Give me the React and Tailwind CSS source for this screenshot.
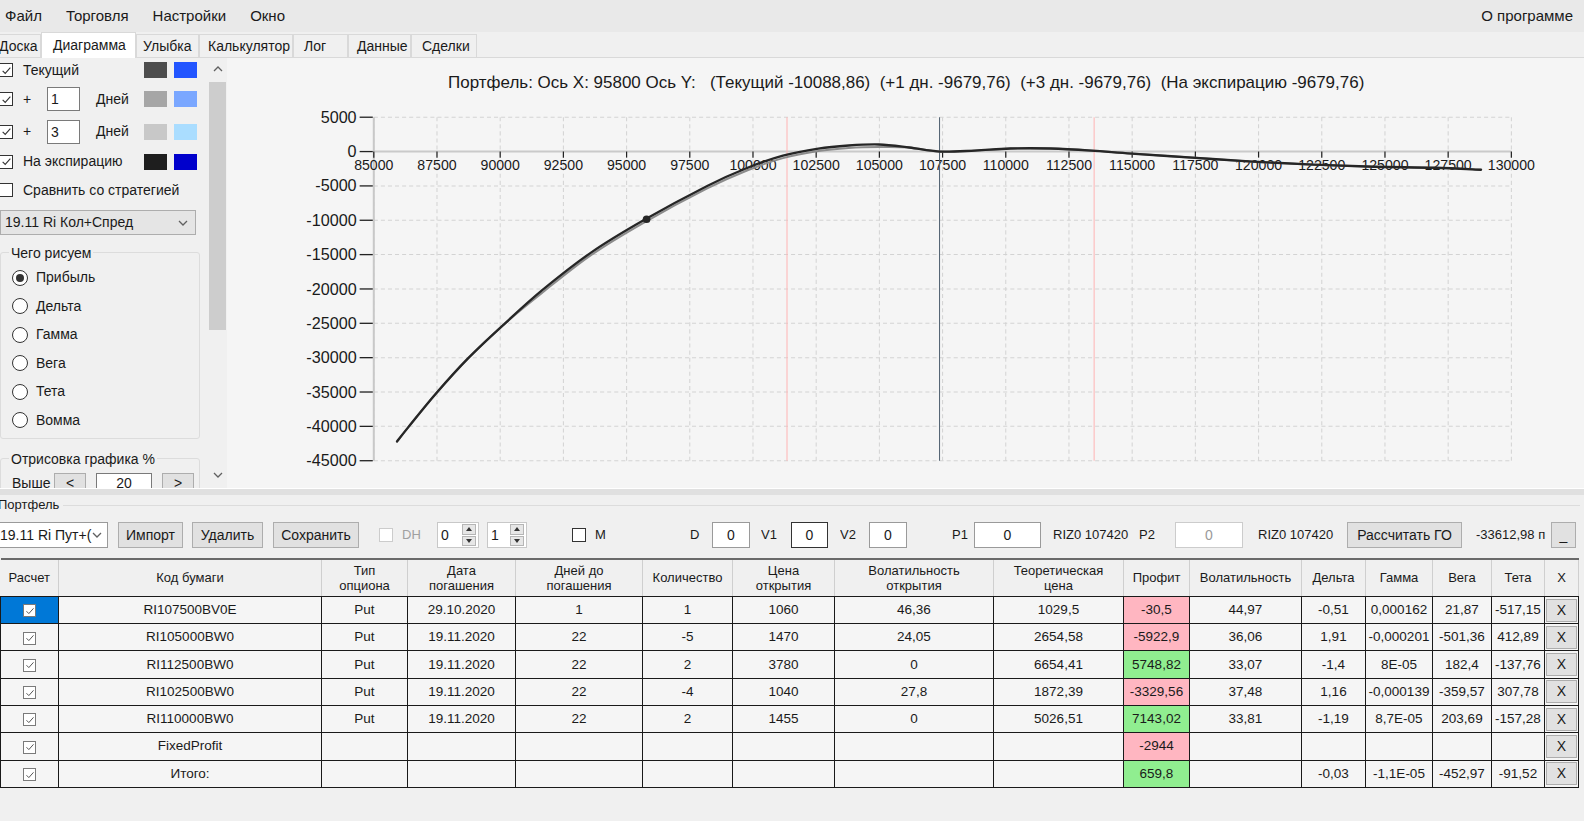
import React from "react";

const font = "font-['Liberation_Sans',Arial,sans-serif]";

const menu = ["Файл", "Торговля", "Настройки", "Окно"];

const tabs = [
    { t: "Доска",       w: "w-[47px]", cls: "-ml-[6px] pl-[4px]" },
    { t: "Диаграмма",   w: "w-[95px]", cls: "pl-[11px]", active: true },
    { t: "Улыбка",      w: "w-[63px]", cls: "pl-[6px]" },
    { t: "Калькулятор", w: "w-[94px]", cls: "pl-[8px]" },
    { t: "Лог",         w: "w-[55px]", cls: "pl-[10px]" },
    { t: "Данные",      w: "w-[63px]", cls: "pl-[8px]" },
    { t: "Сделки",      w: "w-[66px]", cls: "pl-[10px]" },
];

const Check = ({ checked = true, disabled = false, className = "" }) => (
    <span className={`inline-flex shrink-0 w-[14px] h-[14px] items-center justify-center border bg-white ${disabled ? "border-[#cccccc]" : "border-[#333333]"} ${className}`}>
        {checked && (
            <svg viewBox="0 0 12 12" className="w-[11px] h-[11px]">
                <path d="M1.8 6.3 L4.6 9.1 L10.2 2.8" fill="none" stroke="#333" strokeWidth="1.2" />
            </svg>
        )}
    </span>
);

const GridCheck = () => (
    <span className="inline-flex w-[13px] h-[13px] items-center justify-center border border-[#7a7a7a] bg-white align-middle">
        <svg viewBox="0 0 12 12" className="w-[10px] h-[10px]">
            <path d="M1.8 6.3 L4.6 9.1 L10.2 2.8" fill="none" stroke="#555" strokeWidth="1.2" />
        </svg>
    </span>
);

const Radio = ({ checked }) => (
    <span className="w-[16px] h-[16px] rounded-full border border-[#333333] bg-white flex items-center justify-center">
        {checked && <span className="w-[8px] h-[8px] rounded-full bg-[#333333]" />}
    </span>
);

const Swatches = ({ a, b }) => (
    <div className="flex gap-[7px]">
        <span className={`w-[23px] h-[16px] ${a}`} />
        <span className={`w-[23px] h-[16px] ${b}`} />
    </div>
);

const Chevron = ({ up }) => (
    <svg viewBox="0 0 10 6" className="w-[10px] h-[6px]">
        <path d={up ? "M1 5 L5 1 L9 5" : "M1 1 L5 5 L9 1"} fill="none" stroke="#606060" strokeWidth="1.3" />
    </svg>
);

// ---------- chart (viewBox units are a hair smaller than page px) ----------
const X0 = 370, X1 = 1496, Y0 = 116, Y1 = 456;
const xTicks = Array.from({ length: 19 }, (_, i) => 85000 + i * 2500);
const yTicks = Array.from({ length: 11 }, (_, i) => 5000 - i * 5000);
const px = v => X0 + (v - 85000) / 2500 * ((X1 - X0) / 18);
const py = v => 150 - v / 5000 * 34;

const curve = [
    [393, 437], [404, 423], [432, 389], [463, 355], [500, 320], [537, 287], [585, 250],
    [637, 218], [700, 184], [740, 166], [775, 154], [810, 147], [840, 144], [870, 143],
    [900, 146], [930, 150], [965, 149], [1000, 147], [1040, 147], [1080, 149], [1120, 152],
    [1180, 156], [1240, 160], [1300, 163], [1360, 165], [1420, 166], [1466, 168],
];
const curve2 = curve.map(([x, y]) => [x, x > 520 && x < 900 ? y + 2.5 : y]);

const smooth = pts => {
    let d = `M${pts[0][0]},${pts[0][1]}`;
    for (let i = 0; i < pts.length - 1; i++) {
        const p0 = pts[i - 1] || pts[i], p1 = pts[i], p2 = pts[i + 1], p3 = pts[i + 2] || p2;
        const c1 = [p1[0] + (p2[0] - p0[0]) / 6, p1[1] + (p2[1] - p0[1]) / 6];
        const c2 = [p2[0] - (p3[0] - p1[0]) / 6, p2[1] - (p3[1] - p1[1]) / 6];
        d += ` C${c1[0]},${c1[1]} ${c2[0]},${c2[1]} ${p2[0]},${p2[1]}`;
    }
    return d;
};

const title = "Портфель: Ось X: 95800 Ось Y:   (Текущий -10088,86)  (+1 дн. -9679,76)  (+3 дн. -9679,76)  (На экспирацию -9679,76)".replace(/ /g, "\u00a0");

const Chart = () => (
    <svg width="1357" height="430" viewBox="224.7 57.4 1343.2 425.6" className="block bg-[#f5f5f5]">
        <text x="897" y="87.5" textAnchor="middle" fontSize="16.8" fill="#1a1a1a">{title}</text>

        {yTicks.filter(v => v !== 0).map(v => (
            <line key={"h" + v} x1={X0} x2={X1} y1={py(v)} y2={py(v)} stroke="#d3d3d3" strokeDasharray="4 3" />
        ))}
        {xTicks.map(v => (
            <line key={"v" + v} x1={px(v)} x2={px(v)} y1={Y0} y2={Y1} stroke="#d3d3d3" strokeDasharray="4 3" />
        ))}

        <line x1={X0} x2={X0} y1={Y0} y2={Y1} stroke="#c8c8c8" strokeWidth="2" />
        <line x1={X0} x2={X1} y1={150} y2={150} stroke="#cacaca" strokeWidth="2" />

        {yTicks.map(v => (
            <g key={"yt" + v}>
                <line x1="356" x2="369" y1={py(v)} y2={py(v)} stroke="#222" strokeWidth="1.3" />
                <text x="353" y={py(v) + 5.5} textAnchor="end" fontSize="16" fill="#1a1a1a">{v}</text>
            </g>
        ))}
        {xTicks.map(v => (
            <g key={"xt" + v}>
                <line x1={px(v)} x2={px(v)} y1="150" y2="156" stroke="#222" strokeWidth="1.2" />
                <text x={px(v)} y="168" textAnchor="middle" fontSize="14" fill="#1a1a1a">{v}</text>
            </g>
        ))}

        <line x1="779" x2="779" y1={Y0} y2={Y1} stroke="#ffb4b4" />
        <line x1="1083" x2="1083" y1={Y0} y2={Y1} stroke="#ffb4b4" />
        <line x1="930" x2="930" y1={Y0} y2={Y1} stroke="#506070" />

        <path d={smooth(curve2)} fill="none" stroke="#8c8c8c" strokeWidth="2" />
        <path d={smooth(curve)} fill="none" stroke="#262626" strokeWidth="2.3" strokeLinecap="round" />
        <circle cx="640" cy="217" r="3.8" fill="#262626" />
    </svg>
);

// ---------- table ----------
const cols = [
    { t: "Расчет", w: "w-[58px]" },
    { t: "Код бумаги", w: "w-[263px]" },
    { t: "Тип\nопциона", w: "w-[86px]" },
    { t: "Дата\nпогашения", w: "w-[108px]" },
    { t: "Дней до\nпогашения", w: "w-[127px]" },
    { t: "Количество", w: "w-[90px]" },
    { t: "Цена\nоткрытия", w: "w-[102px]" },
    { t: "Волатильность\nоткрытия", w: "w-[159px]" },
    { t: "Теоретическая\nцена", w: "w-[130px]" },
    { t: "Профит", w: "w-[66px]" },
    { t: "Волатильность", w: "w-[112px]" },
    { t: "Дельта", w: "w-[64px]" },
    { t: "Гамма", w: "w-[67px]" },
    { t: "Вега", w: "w-[59px]" },
    { t: "Тета", w: "w-[53px]" },
    { t: "X", w: "w-[34px]" },
];

const rows = [
    ["RI107500BV0E", "Put", "29.10.2020", "1", "1", "1060", "46,36", "1029,5", "-30,5", "44,97", "-0,51", "0,000162", "21,87", "-517,15"],
    ["RI105000BW0", "Put", "19.11.2020", "22", "-5", "1470", "24,05", "2654,58", "-5922,9", "36,06", "1,91", "-0,000201", "-501,36", "412,89"],
    ["RI112500BW0", "Put", "19.11.2020", "22", "2", "3780", "0", "6654,41", "5748,82", "33,07", "-1,4", "8E-05", "182,4", "-137,76"],
    ["RI102500BW0", "Put", "19.11.2020", "22", "-4", "1040", "27,8", "1872,39", "-3329,56", "37,48", "1,16", "-0,000139", "-359,57", "307,78"],
    ["RI110000BW0", "Put", "19.11.2020", "22", "2", "1455", "0", "5026,51", "7143,02", "33,81", "-1,19", "8,7E-05", "203,69", "-157,28"],
    ["FixedProfit", "", "", "", "", "", "", "", "-2944", "", "", "", "", ""],
    ["Итого:", "", "", "", "", "", "", "", "659,8", "", "-0,03", "-1,1E-05", "-452,97", "-91,52"],
];

const Btn = ({ children, w, ml }) => (
    <button className={`${w} ${ml} h-[26px] shrink-0 bg-[#e1e1e1] border border-[#adadad] text-[14px] text-[#1a1a1a] whitespace-nowrap`}>{children}</button>
);

const Inp = ({ w, ml, v, dark, disabled }) => (
    <div className={`${w} ${ml} h-[26px] shrink-0 flex items-center justify-center bg-white border ${dark ? "border-[#333333]" : disabled ? "border-[#cccccc]" : "border-[#9a9a9a]"} ${disabled ? "text-[#9a9a9a]" : "text-[#1a1a1a]"} text-[14px]`}>{v}</div>
);

const Lbl = ({ children, w, ml, gray }) => (
    <span className={`${w} ${ml} shrink-0 whitespace-nowrap overflow-hidden text-[13px] ${gray ? "text-[#a0a0a0]" : "text-[#1a1a1a]"}`}>{children}</span>
);

const Spin = ({ v, w, ml }) => (
    <div className={`${w} ${ml} h-[26px] shrink-0 flex items-center bg-white border border-[#c8c8c8] pl-[3px] text-[14px]`}>
        <span className="flex-1">{v}</span>
        <div className="w-[14px] h-[22px] mr-[2px] flex flex-col gap-[1px]">
            {[true, false].map(up => (
                <span key={up ? "u" : "d"} className="flex-1 bg-[#e6e6e6] border border-[#b5b5b5] flex items-center justify-center">
                    <svg viewBox="0 0 6 4" className="w-[6px] h-[4px]"><path d={up ? "M0 4 L3 0 L6 4Z" : "M0 0 L3 4 L6 0Z"} fill="#333" /></svg>
                </span>
            ))}
        </div>
    </div>
);

export default function App() {
    return (
        <div className={`${font} w-[1584px] h-[821px] overflow-hidden bg-[#f0f0f0] flex flex-col text-[#1a1a1a]`}>
            {/* menu */}
            <div className="h-[32px] bg-[#e9e9e9] flex items-center pl-[5px] text-[15px]">
                {menu.map(m => <span key={m} className="mr-[24px]">{m}</span>)}
                <span className="ml-auto mr-[11px]">О программе</span>
            </div>

            {/* tabs */}
            <div className="h-[26px] flex items-end border-b border-[#d9d9d9] text-[14px]">
                {tabs.map(t => (
                    <div key={t.t}
                        className={`${t.w} ${t.cls} shrink-0 flex items-center border border-b-0 border-[#d9d9d9] ${t.active ? "h-[26px] bg-white relative z-10 -mb-[1px]" : "h-[23px] bg-[#f0f0f0]"}`}>
                        {t.t}
                    </div>
                ))}
            </div>

            {/* top area */}
            <div className="h-[430px] flex">
                <div className="w-[208px] h-[430px] overflow-hidden text-[14px]">
                    <div className="h-[22px] mt-[1px] flex items-center">
                        <Check className="-ml-[1px]" />
                        <span className="ml-[10px] w-[121px]">Текущий</span>
                        <Swatches a="bg-[#4d4d4d]" b="bg-[#2255ff]" />
                    </div>
                    <div className="h-[26px] mt-[5px] flex items-center">
                        <Check className="-ml-[1px]" />
                        <div className="ml-[10px] w-[121px] flex items-center">
                            <span className="w-[24px]">+</span>
                            <span className="w-[33px] h-[24px] bg-white border border-[#7a7a7a] pl-[3px] leading-[22px]">1</span>
                            <span className="ml-[16px]">Дней</span>
                        </div>
                        <Swatches a="bg-[#a6a6a6]" b="bg-[#7aa7ff]" />
                    </div>
                    <div className="h-[26px] mt-[6.5px] flex items-center">
                        <Check className="-ml-[1px]" />
                        <div className="ml-[10px] w-[121px] flex items-center">
                            <span className="w-[24px]">+</span>
                            <span className="w-[33px] h-[24px] bg-white border border-[#7a7a7a] pl-[3px] leading-[22px]">3</span>
                            <span className="ml-[16px]">Дней</span>
                        </div>
                        <Swatches a="bg-[#c8c8c8]" b="bg-[#aaddff]" />
                    </div>
                    <div className="h-[22px] mt-[6px] flex items-center">
                        <Check className="-ml-[1px]" />
                        <span className="ml-[10px] w-[121px]">На экспирацию</span>
                        <Swatches a="bg-[#1e1e1e]" b="bg-[#0000cc]" />
                    </div>
                    <div className="h-[22px] mt-[6.5px] flex items-center">
                        <Check checked={false} className="-ml-[1px]" />
                        <span className="ml-[10px]">Сравнить со стратегией</span>
                    </div>
                    <div className="w-[196px] h-[25px] mt-[9px] flex items-center bg-[#e5e5e5] border border-[#adadad] pl-[4px] pr-[7px]">
                        <span className="flex-1">19.11 Ri Кол+Спред</span>
                        <Chevron />
                    </div>

                    <fieldset className="w-[200px] mt-[9.5px] border border-[#dcdcdc] rounded-[3px] pb-[3.5px]">
                        <legend className="ml-[8px] px-[2px] leading-[16px]">Чего рисуем</legend>
                        <div className="mt-[3px]">
                            {["Прибыль", "Дельта", "Гамма", "Вега", "Тета", "Вомма"].map((r, i) => (
                                <div key={r} className="h-[28.5px] flex items-center pl-[11px] gap-[8px]">
                                    <Radio checked={i === 0} />
                                    <span>{r}</span>
                                </div>
                            ))}
                        </div>
                    </fieldset>

                    <fieldset className="w-[200px] mt-[11.5px] border border-[#dcdcdc] rounded-[3px] h-[80px]">
                        <legend className="ml-[8px] px-[2px] leading-[16px]">Отрисовка графика %</legend>
                        <div className="flex items-center mt-[6px] pl-[11px]">
                            <span className="w-[42px]">Выше</span>
                            <span className="w-[32px] h-[22px] bg-[#e1e1e1] border border-[#adadad] flex items-center justify-center">&lt;</span>
                            <span className="ml-[10px] w-[56px] h-[22px] bg-white border border-[#7a7a7a] flex items-center justify-center">20</span>
                            <span className="ml-[10px] w-[32px] h-[22px] bg-[#e1e1e1] border border-[#adadad] flex items-center justify-center">&gt;</span>
                        </div>
                    </fieldset>
                </div>

                {/* scrollbar */}
                <div className="w-[19px] h-[430px] flex flex-col items-center bg-[#f0f0f0]">
                    <div className="h-[22px] flex items-center"><Chevron up /></div>
                    <div className="w-[17px] h-[248px] mt-[2px] bg-[#cdcdcd]" />
                    <div className="flex-1" />
                    <div className="h-[20px] flex items-start pt-[4px]"><Chevron /></div>
                </div>

                <Chart />
            </div>

            {/* splitter */}
            <div className="h-[1px] bg-white" />
            <div className="h-[6px] bg-[#e0e0e0]" />

            {/* portfolio group */}
            <div className="h-[20px] flex items-center text-[13px]">
                <span className="-ml-[2px]">Портфель</span>
                <span className="flex-1 h-[1px] bg-[#dcdcdc] ml-[4px] mr-[4px]" />
            </div>

            <div className="h-[26px] mt-[7px] flex items-center">
                <div className="w-[112px] -ml-[4px] h-[26px] shrink-0 flex items-center bg-white border border-[#9a9a9a] pl-[3px] pr-[5px] text-[14px]">
                    <span className="flex-1 whitespace-nowrap overflow-hidden">19.11 Ri Пут+(</span>
                    <Chevron />
                </div>
                <Btn w="w-[65px]" ml="ml-[10px]">Импорт</Btn>
                <Btn w="w-[71px]" ml="ml-[9px]">Удалить</Btn>
                <Btn w="w-[86px]" ml="ml-[10px]">Сохранить</Btn>
                <Check checked={false} disabled className="ml-[20px]" />
                <Lbl w="w-[20px]" ml="ml-[9px]" gray>DH</Lbl>
                <Spin v="0" w="w-[42px]" ml="ml-[15px]" />
                <Spin v="1" w="w-[40px]" ml="ml-[8px]" />
                <Check checked={false} className="ml-[45px]" />
                <Lbl w="w-[12px]" ml="ml-[9px]">M</Lbl>
                <Lbl w="w-[10px]" ml="ml-[83px]">D</Lbl>
                <Inp w="w-[38px]" ml="ml-[12px]" v="0" />
                <Lbl w="w-[16px]" ml="ml-[11px]">V1</Lbl>
                <Inp w="w-[37px]" ml="ml-[14px]" v="0" dark />
                <Lbl w="w-[17px]" ml="ml-[12px]">V2</Lbl>
                <Inp w="w-[38px]" ml="ml-[12px]" v="0" />
                <Lbl w="w-[16px]" ml="ml-[45px]">P1</Lbl>
                <Inp w="w-[67px]" ml="ml-[6px]" v="0" />
                <Lbl w="w-[78px]" ml="ml-[12px]">RIZ0 107420</Lbl>
                <Lbl w="w-[16px]" ml="ml-[8px]">P2</Lbl>
                <Inp w="w-[68px]" ml="ml-[20px]" v="0" disabled />
                <Lbl w="w-[78px]" ml="ml-[15px]">RIZ0 107420</Lbl>
                <Btn w="w-[115px]" ml="ml-[11px]">Рассчитать ГО</Btn>
                <Lbl w="w-[71px]" ml="ml-[14px]">-33612,98 п</Lbl>
                <Btn w="w-[25px]" ml="ml-[4px]">_</Btn>
            </div>

            {/* grid */}
            <table className="mt-[10px] w-[1578px] table-fixed border-collapse border-t-2 border-[#6a6a6a]">
                <colgroup>
                    {cols.map(c => <col key={c.t} className={c.w} />)}
                </colgroup>
                <thead>
                    <tr>
                        {cols.map(c => (
                            <th key={c.t} className="h-[37.4px] bg-[#f0f0f0] font-normal text-[13px] leading-[15px] whitespace-pre-line border-r border-b border-[#cfcfcf] border-b-[#1a1a1a] text-center">
                                {c.t}
                            </th>
                        ))}
                    </tr>
                </thead>
                <tbody>
                    {rows.map((r, i) => (
                        <tr key={i} className="h-[27.3px]">
                            <td className={`border border-[#1a1a1a] text-center ${i === 0 ? "bg-[#0078d7]" : "bg-[#f5f5f5]"}`}>
                                <GridCheck />
                            </td>
                            {r.map((v, j) => {
                                const profit = j === 8;
                                const bg = profit ? (v.startsWith("-") ? "bg-[#ffb6c1]" : "bg-[#90ee90]") : "bg-[#f5f5f5]";
                                return (
                                    <td key={j} className={`border border-[#1a1a1a] ${bg} text-center text-[13.5px] whitespace-nowrap overflow-hidden`}>
                                        {v}
                                    </td>
                                );
                            })}
                            <td className="border border-[#1a1a1a] bg-[#f5f5f5] p-[1px]">
                                <div className="h-[23px] bg-[#e1e1e1] border border-[#adadad] flex items-center justify-center text-[14px]">X</div>
                            </td>
                        </tr>
                    ))}
                </tbody>
            </table>
        </div>
    );
}
